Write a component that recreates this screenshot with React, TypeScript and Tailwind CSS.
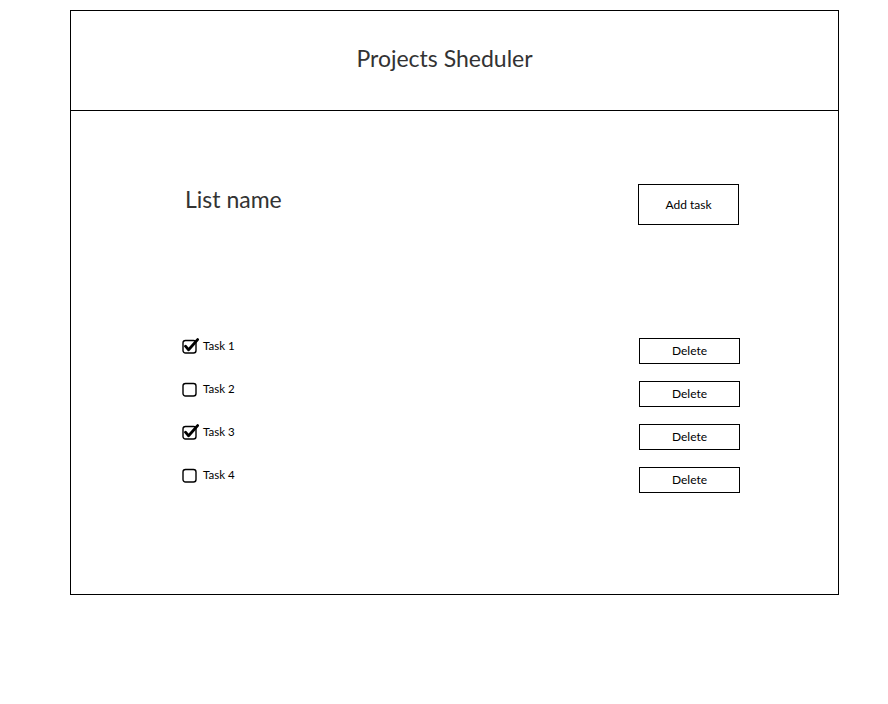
import { useState } from "react";

type Task = { id: number; name: string; done: boolean };

function CheckIcon({ done }: { done: boolean }) {
  return (
    <svg width="18" height="16" viewBox="0 0 18 16" className="shrink-0">
      <rect x="1" y="2.5" width="13" height="12.5" rx="2.5" fill="none" stroke="#000" strokeWidth="1.4" />
      {done && (
        <path d="M3.5 8.2 L6.6 11.8 L15.6 1.6" fill="none" stroke="#000" strokeWidth="2.8" strokeLinecap="round" strokeLinejoin="round" />
      )}
    </svg>
  );
}

export default function App() {
  const [tasks, setTasks] = useState<Task[]>([
    { id: 1, name: "Task 1", done: true },
    { id: 2, name: "Task 2", done: false },
    { id: 3, name: "Task 3", done: true },
    { id: 4, name: "Task 4", done: false },
  ]);

  const toggle = (id: number) => {
    setTasks(tasks.map((t) => (t.id === id ? { ...t, done: !t.done } : t)));
  };
  const remove = (id: number) => {
    setTasks(tasks.filter((t) => t.id !== id));
  };

  return (
    <div className="min-h-[704px] bg-white font-['Lato','Liberation_Sans',sans-serif]">
      <div className="ml-[70px] pt-[10px] w-[769px]">
        <div className="border border-black">
          <header className="h-[100px] flex items-center justify-center border-b border-black">
            <h1 className="text-[23px] text-[#333] -ml-[20px] -mt-[4px]">Projects Sheduler</h1>
          </header>
          <main className="h-[483px] pt-[73px] pl-[111px] pr-[99px]">
            <div className="flex items-center justify-between h-[41px]">
              <h2 className="text-[23px] text-[#333] pl-[3px] -mt-[10px]">List name</h2>
              <button className="w-[101px] h-[41px] border border-black text-[12px] text-black">
                Add task
              </button>
            </div>
            <ul className="mt-[113px] flex flex-col gap-[17px]">
              {tasks.map((task) => (
                <li key={task.id} className="flex items-start justify-between h-[26px]">
                  <label
                    className="flex items-center gap-[3px] h-[16px] cursor-pointer"
                    onClick={() => toggle(task.id)}
                  >
                    <CheckIcon done={task.done} />
                    <span className="text-[11.5px] text-black">{task.name}</span>
                  </label>
                  <button
                    onClick={() => remove(task.id)}
                    className="w-[101px] h-[26px] border border-black text-[12px] text-black -mr-[1px]"
                  >
                    Delete
                  </button>
                </li>
              ))}
            </ul>
          </main>
        </div>
      </div>
    </div>
  );
}
